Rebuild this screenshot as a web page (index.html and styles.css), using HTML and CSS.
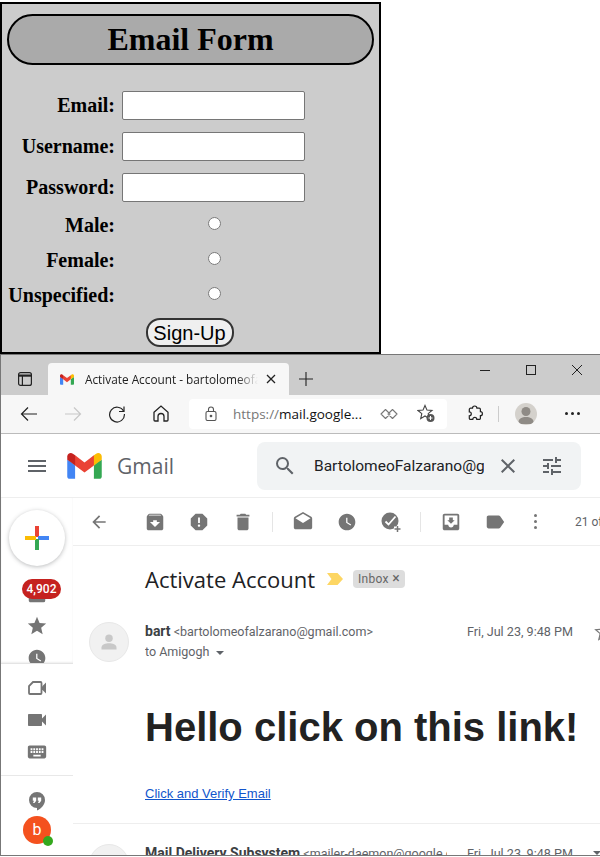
FILE: index.html
```html
<!DOCTYPE html>
<html lang="en">
<head>
<meta charset="UTF-8">
<meta name="viewport" content="width=device-width, initial-scale=1.0">
<title>Email Form</title>
<link rel="stylesheet" href="styles.css">
</head>
<body>
<svg class="defs" width="0" height="0">
    <symbol id="mlogo" viewBox="0 0 256 193">
        <path fill="#4285f4" d="M58.18 192.05V93.14L27.5 65.08 0 49.51v125.09c0 9.66 7.83 17.45 17.45 17.45h40.73z"/>
        <path fill="#34a853" d="M197.82 192.05h40.73c9.65 0 17.45-7.83 17.45-17.45V49.51l-31.16 17.84-27.02 25.79v98.91z"/>
        <path fill="#ea4335" d="M58.18 93.14l-4.17-38.65 4.17-36.99L128 69.87l69.82-52.37 4.67 34.99-4.67 40.65L128 145.5z"/>
        <path fill="#fbbc04" d="M197.82 17.5v75.64L256 49.51V26.24c0-21.58-24.64-33.88-41.89-20.95z"/>
        <path fill="#c5221f" d="M0 49.51l26.76 20.07L58.18 93.14V17.5L41.89 5.29C24.61-7.64 0 4.66 0 26.24z"/>
    </symbol>
    <symbol id="clock" viewBox="0 0 24 24"><path d="M11.99 2C6.47 2 2 6.48 2 12s4.47 10 9.99 10C17.52 22 22 17.52 22 12S17.52 2 11.99 2zm4.24 14.24L11 13V7h1.5v5.25l4.5 2.67-.77 1.32z"/></symbol>
    <symbol id="star" viewBox="0 0 24 24"><path d="M12 17.27L18.18 21l-1.64-7.03L22 9.24l-7.19-.61L12 2 9.19 8.63 2 9.24l5.46 4.73L5.82 21z"/></symbol>
</svg>

<form class="signup">
    <h1 class="signup-title">Email Form</h1>
    <div class="field"><label>Email:</label><input type="text"></div>
    <div class="field"><label>Username:</label><input type="text"></div>
    <div class="field"><label>Password:</label><input type="password"></div>
    <div class="field radio first-radio"><label>Male:</label><span class="radio-cell"><input type="radio" name="g"></span></div>
    <div class="field radio"><label>Female:</label><span class="radio-cell"><input type="radio" name="g"></span></div>
    <div class="field radio"><label>Unspecified:</label><span class="radio-cell"><input type="radio" name="g"></span></div>
    <div class="signup-foot"><button type="button" class="signup-btn">Sign-Up</button></div>
</form>

<div class="window">
    <div class="tabstrip">
        <svg class="tab-panel" width="16" height="16" viewBox="0 0 16 16" fill="none" stroke="#222" stroke-width="1.2"><rect x="1.6" y="1.6" width="12.8" height="12.8" rx="2"/><path d="M1.6 4.6h12.8" stroke-width="2.2"/><path d="M5.4 4.6v9.8"/></svg>
        <div class="tab">
            <svg class="tab-logo" width="14" height="11"><use href="#mlogo"/></svg>
            <span class="tab-title">Activate Account - bartolomeofalzarano</span>
            <svg width="10" height="10" viewBox="0 0 10 10" stroke="#222" stroke-width="1.3"><path d="M1 1l8 8M9 1l-8 8"/></svg>
        </div>
        <svg class="tab-new" width="14" height="14" viewBox="0 0 14 14" stroke="#222" stroke-width="1.1"><path d="M7 0v14M0 7h14"/></svg>
        <div class="winctl">
            <svg width="10" height="10" viewBox="0 0 10 10" stroke="#222"><path d="M0 5.5h10"/></svg>
            <svg width="10" height="10" viewBox="0 0 10 10" stroke="#222" fill="none"><rect x=".5" y=".5" width="9" height="9"/></svg>
            <svg width="10" height="10" viewBox="0 0 10 10" stroke="#222"><path d="M0 0l10 10M10 0L0 10"/></svg>
        </div>
    </div>

    <div class="toolbar">
        <span class="tool"><svg width="18" height="16" viewBox="0 0 18 16" fill="none" stroke="#222" stroke-width="1.2"><path d="M17 8H1.5M8 1.5L1.5 8 8 14.5"/></svg></span>
        <span class="tool"><svg width="18" height="16" viewBox="0 0 18 16" fill="none" stroke="#c8c8c8" stroke-width="1.2"><path d="M1 8h15.5M10 1.5L16.5 8 10 14.5"/></svg></span>
        <span class="tool"><svg width="18" height="18" viewBox="0 0 18 18" fill="none" stroke="#222" stroke-width="1.2"><path d="M15.6 6.2A7.4 7.4 0 1 0 16.4 9"/><path d="M16 1.5v5h-5"/></svg></span>
        <span class="tool"><svg width="16" height="17" viewBox="0 0 16 17" fill="none" stroke="#222" stroke-width="1.3"><path d="M1 7.2L8 1l7 6.2V15a1 1 0 0 1-1 1h-3v-4.5a3 3 0 0 0-6 0V16H2a1 1 0 0 1-1-1z"/></svg></span>
        <div class="addr">
            <svg width="12" height="15" viewBox="0 0 12 15" fill="none" stroke="#555" stroke-width="1.1"><rect x="1" y="5.5" width="10" height="9" rx="1.5"/><path d="M3.5 5.5V3.5a2.5 2.5 0 0 1 5 0v2"/><circle cx="6" cy="10" r=".8" fill="#555"/></svg>
            <span class="addr-url"><span class="addr-dim">https://</span>mail.google...</span>
            <svg class="addr-read" width="18" height="12" viewBox="0 0 18 12" fill="none" stroke="#777" stroke-width="1.1"><path d="M5.500 1.500L10 6l-4.500 4.500L1 6zM12.500 1.500L17 6l-4.500 4.500L8 6z" stroke-linejoin="round"/></svg>
            <svg class="addr-fav" width="19" height="19" viewBox="0 0 19 19"><path fill="none" stroke="#444" stroke-width="1.1" d="M8 1.5l2 4.6 5 .4-3.8 3.2 1.1 4.9L8 12l-4.3 2.6 1.1-4.9L1 6.500l5-.4z"/><circle cx="13.500" cy="14" r="4" fill="#555"/><path stroke="#fff" d="M13.500 12v4M11.500 14h4"/></svg>
        </div>
        <svg class="tb-puzzle" width="16" height="17" viewBox="0 0 16 17" fill="none" stroke="#222" stroke-width="1.2"><path d="M5.500 3.200a2.200 2.200 0 0 1 4.400 0h2.300a1.200 1.200 0 0 1 1.200 1.200v2.300a2 2 0 0 1 0 4v2.500a1.200 1.200 0 0 1-1.200 1.200H9.800a2 2 0 0 0-4 0H3.500a1.200 1.200 0 0 1-1.200-1.200v-2.400a2 2 0 0 0 0-4V4.400a1.200 1.200 0 0 1 1.200-1.200z"/></svg>
        <span class="tb-sep"></span>
        <span class="tb-avatar"><svg width="22" height="22" viewBox="0 0 22 22"><circle cx="11" cy="8.500" r="4.500" fill="#8f8b86"/><path fill="#8f8b86" d="M3.500 21v-2c0-3.500 3.500-5 7.500-5s7.500 1.500 7.500 5v2z"/></svg></span>
        <span class="tb-dots"><i></i><i></i><i></i></span>
    </div>

    <header class="gm-head">
        <svg class="gm-menu" width="24" height="24" viewBox="0 0 24 24" fill="#5f6368"><path d="M3 18h18v-2H3v2zm0-5h18v-2H3v2zm0-7v2h18V6H3z"/></svg>
        <svg class="gm-logo" width="35" height="26"><use href="#mlogo"/></svg>
        <span class="gm-word">Gmail</span>
        <div class="gm-search">
            <svg width="24" height="24" viewBox="0 0 24 24" fill="#5f6368"><path d="M15.500 14h-.79l-.28-.27A6.470 6.470 0 0 0 16 9.500 6.500 6.500 0 1 0 9.500 16c1.610 0 3.090-.59 4.230-1.570l.27.28v.79l5 4.990L20.490 19l-4.990-5zm-6 0C7.010 14 5 11.990 5 9.500S7.010 5 9.500 5 14 7.010 14 9.500 11.990 14 9.500 14z"/></svg>
            <span class="gm-query">BartolomeoFalzarano@gmail.com</span>
            <svg width="24" height="24" viewBox="0 0 24 24" fill="#5f6368"><path d="M19 6.410L17.590 5 12 10.590 6.410 5 5 6.410 10.590 12 5 17.590 6.410 19 12 13.410 17.590 19 19 17.590 13.410 12z"/></svg>
            <svg width="24" height="24" viewBox="0 0 24 24" fill="#5f6368"><path d="M3 17v2h6v-2H3zM3 5v2h10V5H3zm10 16v-2h8v-2h-8v-2h-2v6h2zM7 9v2H3v2h4v2h2V9H7zm14 4v-2H11v2h10zm-6-4h2V7h4V5h-4V3h-2v6z"/></svg>
        </div>
    </header>

    <div class="gm-body">
        <aside class="gm-side">
            <div class="side-top">
                <div class="compose"><svg width="26" height="26" viewBox="0 0 26 26"><path fill="#ea4335" d="M11 1h4v11h-4z"/><path fill="#4285f4" d="M14 11h11v4H14z"/><path fill="#34a853" d="M11 14h4v11h-4z"/><path fill="#fbbc04" d="M1 11h11v4H1z"/></svg></div>
                <div class="side-item inbox">
                    <svg width="22" height="22" viewBox="0 0 24 24" fill="#757575"><path d="M19 3H5a2 2 0 0 0-2 2v14c0 1.100.9 2 2 2h14a2 2 0 0 0 2-2V5a2 2 0 0 0-2-2z"/></svg>
                    <span class="badge">4,902</span>
                </div>
                <div class="side-item"><svg width="22" height="22" fill="#757575"><use href="#star"/></svg></div>
                <div class="side-item"><svg width="20" height="20" fill="#757575"><use href="#clock"/></svg></div>
            </div>
            <div class="side-meet">
                <div class="side-item"><svg width="24" height="24" viewBox="0 0 24 24" fill="none" stroke="#757575" stroke-width="1.800"><path d="M8 6h7.500a1 1 0 0 1 1 1v10a1 1 0 0 1-1 1H5a1 1 0 0 1-1-1v-7z"/><path fill="#757575" stroke="none" d="M17 10.500l4-4v11l-4-4z"/></svg></div>
                <div class="side-item"><svg width="24" height="24" viewBox="0 0 24 24" fill="#757575"><path d="M17 10.500V7c0-.55-.45-1-1-1H4c-.55 0-1 .45-1 1v10c0 .55.45 1 1 1h12c.55 0 1-.45 1-1v-3.500l4 4v-11l-4 4z"/></svg></div>
                <div class="side-item"><svg width="22" height="22" viewBox="0 0 24 24" fill="#757575"><path d="M20 5H4c-1.100 0-1.990.9-1.990 2L2 17c0 1.100.9 2 2 2h16c1.100 0 2-.9 2-2V7c0-1.100-.9-2-2-2zm-9 3h2v2h-2V8zm0 3h2v2h-2v-2zM8 8h2v2H8V8zm0 3h2v2H8v-2zm-1 2H5v-2h2v2zm0-3H5V8h2v2zm9 7H8v-2h8v2zm0-4h-2v-2h2v2zm0-3h-2V8h2v2zm3 3h-2v-2h2v2zm0-3h-2V8h2v2z"/></svg></div>
            </div>
            <div class="side-chat">
                <svg width="18" height="20" viewBox="0 0 18 20"><path fill="#757575" d="M9 1a8 8 0 0 0-8 8 8 8 0 0 0 8 8v2.500c4.500-2 8-5.800 8-10.500a8 8 0 0 0-8-8z"/><path fill="#fff" d="M4.800 6.500h3.400v3.200l-1.700 2.300H5l1-2.200H4.800zM9.800 6.500h3.400v3.200L11.500 12H10l1-2.200H9.800z"/></svg>
                <div class="me">b<span class="me-dot"></span></div>
            </div>
        </aside>

        <main class="gm-main">
            <div class="actions">
                <span class="act act-back"><svg width="20" height="20" viewBox="0 0 24 24" fill="#757575"><path d="M20 11H7.830l5.590-5.590L12 4l-8 8 8 8 1.410-1.410L7.830 13H20v-2z"/></svg></span>
                <span class="act"><svg width="22" height="22" viewBox="0 0 24 24" fill="#757575"><path d="M20.540 5.230l-1.390-1.680C18.880 3.210 18.470 3 18 3H6c-.47 0-.88.21-1.160.55L3.460 5.230C3.170 5.570 3 6.020 3 6.500V19c0 1.100.9 2 2 2h14c1.100 0 2-.9 2-2V6.500c0-.48-.17-.93-.46-1.270zM12 17.500L6.500 12H10v-2h4v2h3.500L12 17.500zM5.120 5l.81-1h12l.94 1H5.120z"/></svg></span>
                <span class="act"><svg width="22" height="22" viewBox="0 0 24 24" fill="#757575"><path d="M15.730 3H8.270L3 8.270v7.460L8.270 21h7.460L21 15.730V8.270L15.730 3zM12 17.300c-.72 0-1.300-.58-1.300-1.300 0-.72.58-1.300 1.300-1.300.72 0 1.300.58 1.300 1.300 0 .72-.58 1.300-1.300 1.300zm1-4.300h-2V7h2v6z"/></svg></span>
                <span class="act"><svg width="22" height="22" viewBox="0 0 24 24" fill="#757575"><path d="M6 19c0 1.100.9 2 2 2h8c1.100 0 2-.9 2-2V7H6v12zM19 4h-3.500l-1-1h-5l-1 1H5v2h14V4z"/></svg></span>
                <span class="act-sep"></span>
                <span class="act"><svg width="22" height="22" viewBox="0 0 24 24" fill="#757575"><path d="M21.990 8c0-.72-.37-1.350-.94-1.700L12 1 2.950 6.300C2.380 6.650 2 7.280 2 8v10c0 1.100.9 2 2 2h16c1.100 0 2-.9 2-2l-.01-10zM12 13L3.740 7.840 12 3l8.260 4.840L12 13z"/></svg></span>
                <span class="act"><svg width="20" height="20" fill="#757575"><use href="#clock"/></svg></span>
                <span class="act"><svg width="22" height="22" viewBox="0 0 22 22"><circle cx="10" cy="10" r="8.500" fill="#757575"/><path fill="none" stroke="#fff" stroke-width="1.800" d="M5.500 10.500l3 3 7-8"/><path fill="none" stroke="#fff" stroke-width="5" d="M19 18h-5M16.500 15.500v5"/><path fill="none" stroke="#757575" stroke-width="1.500" d="M20.500 18h-6M17.500 15v6"/></svg></span>
                <span class="act-sep"></span>
                <span class="act"><svg width="22" height="22" viewBox="0 0 24 24" fill="#757575"><path d="M19 3H5c-1.100 0-2 .9-2 2v14c0 1.100.9 2 2 2h14c1.100 0 2-.9 2-2V5c0-1.100-.9-2-2-2zm0 12h-4c0 1.660-1.340 3-3 3s-3-1.340-3-3H5V5h14v10zm-3-5h-2V7h-4v3H8l4 4 4-4z"/></svg></span>
                <span class="act"><svg width="22" height="22" viewBox="0 0 24 24" fill="#757575"><path d="M17.630 5.840C17.270 5.330 16.670 5 16 5L5 5.010C3.900 5.010 3 5.900 3 7v10c0 1.100.9 1.990 2 1.990L16 19c.67 0 1.270-.33 1.630-.84L22 12l-4.370-6.160z"/></svg></span>
                <span class="act-more"><i></i><i></i><i></i></span>
                <span class="act-count">21 of 120</span>
            </div>

            <div class="subject">
                <h2>Activate Account</h2>
                <svg width="16" height="12" viewBox="0 0 16 12"><path fill="#fdd663" d="M0 0h10.500L16 6l-5.500 6H0l4.500-6z"/></svg>
                <span class="chip">Inbox <b>×</b></span>
            </div>

            <div class="msg-head">
                <div class="msg-avatar"><svg width="20" height="20" viewBox="0 0 24 24" fill="#c8c8c8"><circle cx="12" cy="7.500" r="4.500"/><path d="M3 21v-2.500c0-3.500 5-5 9-5s9 1.500 9 5V21z"/></svg></div>
                <div class="msg-meta">
                    <div class="msg-from"><b>bart</b> <span>&lt;bartolomeofalzarano@gmail.com&gt;</span></div>
                    <div class="msg-to">to Amigogh <i class="caret"></i></div>
                </div>
                <span class="msg-date">Fri, Jul 23, 9:48 PM</span>
                <svg class="msg-star" width="20" height="20" fill="none" stroke="#777" stroke-width="1.500" viewBox="0 0 24 24"><path d="M12 17.270L18.180 21l-1.640-7.030L22 9.240l-7.190-.61L12 2 9.190 8.630 2 9.240l5.460 4.730L5.820 21z"/></svg>
            </div>

            <div class="msg-body">
                <h1>Hello click on this link!</h1>
                <a href="#">Click and Verify Email</a>
            </div>

            <div class="msg-head msg-next">
                <div class="msg-avatar"></div>
                <div class="msg-meta">
                    <div class="msg-from"><b>Mail Delivery Subsystem</b> <span>&lt;mailer-daemon@google.com&gt;</span></div>
                </div>
                <span class="msg-date">Fri, Jul 23, 9:48 PM</span>
                <i class="caret msg-caret"></i>
            </div>
        </main>
    </div>
</div>
</body>
</html>
```
FILE: styles.css
```css
html, body {
    margin: 0;
    height: 857px;
    overflow: hidden;
    background: #fff;
}
.defs { display: block; height: 0; }
* { box-sizing: border-box; }

/* the form on top */
.signup {
    width: 381px;
    height: 352px;
    margin-top: 2px;
    padding: 10px 5px 0 5px;
    background: #ccc;
    border: 2px solid #000;
    font-family: "Liberation Serif", serif;
}
.signup-title {
    height: 51px;
    margin: 0 0 26px;
    background: #aaa;
    border: 2px solid #000;
    border-radius: 26px;
    font-size: 32px;
    line-height: 46px;
    text-align: center;
}
.field {
    display: flex;
    align-items: center;
    gap: 7px;
    height: 29px;
    margin-bottom: 12px;
}
.field label {
    width: 108px;
    flex: none;
    white-space: nowrap;
    text-align: right;
    font-size: 20px;
    font-weight: bold;
}
.field input[type=text], .field input[type=password] {
    width: 183px;
    height: 29px;
    margin: 0;
    background: #fff;
    border: 1px solid #767676;
    border-radius: 2px;
}
.field.radio { height: 23px; margin-bottom: 12px; }
.field.first-radio { margin-top: -2px; }
.field.radio label { padding-top: 4px; }
.radio-cell { width: 185px; text-align: center; line-height: 0; }
.radio-cell input { width: 13px; height: 13px; margin: 0; }
.signup-foot { display: flex; justify-content: center; padding: 1px 2px 0 0; }
.signup-btn {
    width: 88px;
    height: 29px;
    padding: 0;
    background: #efefef;
    border: 2px solid #333;
    border-radius: 14px;
    font-family: "Liberation Sans", sans-serif;
    font-size: 20px;
    line-height: 24px;
    color: #000;
}

/* browser window */
.window {
    height: 502px;
    border: 1px solid #777;
    border-width: 1px 0 1px 1px;
    overflow: hidden;
    font-family: Roboto, sans-serif;
    color: #222;
}
.tabstrip {
    display: flex;
    align-items: flex-end;
    height: 40px;
    background: #ccc;
}
.tab-panel { margin: 0 15px 8px 16px; }
.tab {
    display: flex;
    align-items: center;
    width: 241px;
    height: 32px;
    padding: 0 12px;
    background: #f7f7f7;
    border-radius: 4px 4px 0 0;
}
.tab-logo { flex: none; margin-right: 11px; }
.tab-title {
    width: 173px;
    margin-right: 8px;
    overflow: hidden;
    white-space: nowrap;
    font-family: "Open Sans", sans-serif;
    font-size: 11.8px;
    -webkit-mask-image: linear-gradient(90deg, #000 88%, transparent);
    mask-image: linear-gradient(90deg, #000 88%, transparent);
}
.tab-new { margin: 0 0 9px 10px; }
.winctl {
    display: flex;
    gap: 36px;
    align-self: flex-start;
    margin: 10px 0 0 167px;
}
.toolbar {
    display: flex;
    align-items: center;
    height: 39px;
    padding: 0 0 1px 6px;
    background: #f7f7f7;
    border-bottom: 1px solid #bbb;
}
.tool {
    display: flex;
    justify-content: center;
    width: 44px;
}
.addr {
    display: flex;
    align-items: center;
    width: 258px;
    height: 30px;
    margin-left: 6px;
    padding-left: 16px;
    background: #fff;
    border-radius: 4px;
}
.addr-url {
    width: 139px;
    margin-left: 16px;
    font-family: "Open Sans", sans-serif;
    font-size: 13.5px;
    white-space: nowrap;
    color: #111;
}
.addr-dim { color: #777; }
.addr-read { margin-left: 8px; }
.addr-fav { margin-left: 19px; }
.tb-puzzle { margin-left: 20px; }
.tb-sep { width: 1px; height: 16px; margin-left: 15px; background: #ccc; }
.tb-avatar {
    width: 22px;
    height: 22px;
    margin-left: 16px;
    overflow: hidden;
    border-radius: 50%;
    background: #d4d1cc;
}
.tb-dots { display: flex; gap: 3px; margin-left: 28px; }
.tb-dots i { width: 3px; height: 3px; border-radius: 50%; background: #222; }

/* gmail */
.gm-head {
    display: flex;
    align-items: center;
    height: 64px;
    padding-left: 24px;
    background: #fff;
    border-bottom: 1px solid #eee;
}
.gm-logo { margin-left: 18px; }
.gm-word {
    width: 140px;
    margin-left: 15px;
    font-family: "Open Sans", sans-serif;
    font-size: 21px;
    color: #5f6368;
}
.gm-search {
    display: flex;
    align-items: center;
    width: 324px;
    height: 48px;
    padding-left: 16px;
    background: #f1f3f4;
    border-radius: 8px;
}
.gm-query {
    width: 170px;
    margin: 0 12px 0 17px;
    overflow: hidden;
    white-space: nowrap;
    font-size: 15.5px;
    color: #202124;
}
.gm-search svg:last-child { margin-left: 20px; }
.gm-body { display: flex; height: 357px; }
.gm-side { width: 72px; flex: none; }
.side-top {
    height: 166px;
    padding-top: 12px;
    overflow: hidden;
    border-bottom: 1px solid #e4e4e4;
    box-shadow: 0 -1px 2px #eee inset;
}
.compose {
    display: flex;
    align-items: center;
    justify-content: center;
    width: 56px;
    height: 56px;
    margin-left: 8px;
    border-radius: 50%;
    background: #fff;
    box-shadow: 0 1px 4px rgba(60, 64, 67, .35);
}
.side-item {
    display: flex;
    align-items: center;
    justify-content: center;
    height: 32px;
    position: relative;
}
.inbox { margin-top: 12px; height: 32px; }
.badge {
    position: absolute;
    left: 21px;
    top: 1px;
    width: 39px;
    height: 20px;
    background: #c5221f;
    border-radius: 10px;
    font-size: 12px;
    font-weight: 500;
    line-height: 20px;
    text-align: center;
    color: #fff;
}
.side-meet {
    height: 112px;
    padding-top: 8px;
    border-bottom: 1px solid #e8e8e8;
}
.side-chat { display: flex; flex-direction: column; align-items: center; padding-top: 15px; }
.me {
    position: relative;
    width: 28px;
    height: 28px;
    margin-top: 5px;
    background: #f4511e;
    border-radius: 50%;
    font-size: 16px;
    line-height: 28px;
    text-align: center;
    color: #fff;
}
.me-dot {
    position: absolute;
    left: 20px;
    top: 20px;
    width: 10px;
    height: 10px;
    background: #34a81e;
    border-radius: 50%;
}
.gm-main { flex: 1; min-width: 0; overflow: hidden; }
.actions {
    display: flex;
    align-items: center;
    height: 48px;
    margin-top: 0;
    white-space: nowrap;
    border-bottom: 1px solid #eee;
}
.act { display: flex; justify-content: center; width: 44px; flex: none; }
.act-back { width: 50px; margin: 0 9px 0 1px; }
.act-sep { width: 1px; height: 20px; margin: 0 8px 0 7px; background: #e5e5e5; flex: none; }
.act-more { display: flex; flex-direction: column; gap: 3px; width: 3px; margin: 0 17px; flex: none; }
.act-more i { width: 3px; height: 3px; border-radius: 50%; background: #757575; }
.act-count { margin-left: 21px; font-size: 12px; color: #5f6368; flex: none; }
.subject {
    display: flex;
    align-items: center;
    height: 34px;
    margin-top: 16px;
    margin-bottom: 26px;
    padding-left: 72px;
}
.subject h2 {
    margin: 0 12px 0 0;
    font-family: "Open Sans", sans-serif;
    font-size: 22px;
    font-weight: 400;
    color: #202124;
}
.chip {
    margin-left: 10px;
    padding: 0 5px;
    height: 18px;
    background: #ddd;
    border-radius: 4px;
    font-size: 12px;
    letter-spacing: .3px;
    line-height: 18px;
    color: #666;
}
.chip b { font-weight: 400; font-size: 14px; line-height: 14px; }
.msg-head {
    display: flex;
    align-items: flex-start;
    height: 40px;
    padding-left: 16px;
    white-space: nowrap;
}
.msg-avatar {
    display: flex;
    align-items: center;
    justify-content: center;
    width: 40px;
    height: 40px;
    flex: none;
    background: #f1f1f1;
    border: 1px solid #e8e8e8;
    border-radius: 50%;
}
.msg-meta { width: 322px; margin-left: 16px; flex: none; overflow: hidden; }
.msg-from { height: 20px; font-size: 12.5px; line-height: 18px; color: #5f6368; }
.msg-from b { font-size: 14px; font-weight: 700; color: #3c4043; }
.msg-to { font-size: 12.5px; line-height: 20px; color: #5f6368; }
.caret {
    display: inline-block;
    margin-left: 3px;
    vertical-align: middle;
    border: 4px solid transparent;
    border-top: 4px solid #5f6368;
    border-bottom: 0;
}
.msg-date { padding-top: 1px; font-size: 12.6px; line-height: 18px; color: #5f6368; flex: none; }
.msg-star { margin-left: 21px; flex: none; }
.msg-body { height: 162px; margin-top: 0; padding: 42px 0 0 72px; border-bottom: 1px solid #eee; }
.msg-body h1 {
    margin: 0 0 33px;
    font-family: "Liberation Sans", sans-serif;
    font-size: 40px;
    line-height: 46px;
    white-space: nowrap;
    color: #222;
}
.msg-body a {
    font-family: "Liberation Sans", sans-serif;
    font-size: 13px;
    color: #15c;
}
.msg-next { margin-top: 20px; }
.msg-next .msg-meta { width: 302px; margin-right: 20px; }
.msg-caret { margin-left: 20px; margin-top: 7px; }
```
